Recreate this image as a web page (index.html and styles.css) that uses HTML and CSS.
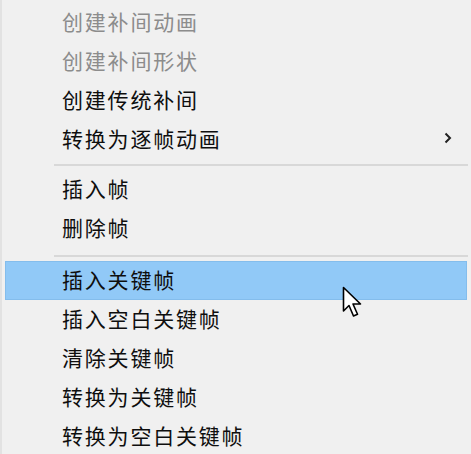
FILE: index.html
```html
<!DOCTYPE html>
<html lang="zh-CN">
<head>
  <meta charset="UTF-8">
  <title>右键菜单</title>
  <link rel="stylesheet" href="styles.css">
</head>
<body>
  <div class="menu">
    <div class="item disabled">创建补间动画</div>
    <div class="item disabled">创建补间形状</div>
    <div class="item">创建传统补间</div>
    <div class="item has-sub">
      转换为逐帧动画
      <svg class="chevron" width="8" height="12" viewBox="0 0 8 12">
        <path d="M1.5 1.5 L6 6 L1.5 10.5" fill="none" stroke="#222" stroke-width="2"/>
      </svg>
    </div>
    <div class="sep sep-a"></div>
    <div class="item">插入帧</div>
    <div class="item">删除帧</div>
    <div class="sep sep-b"></div>
    <div class="item active">插入关键帧</div>
    <div class="item">插入空白关键帧</div>
    <div class="item">清除关键帧</div>
    <div class="item">转换为关键帧</div>
    <div class="item">转换为空白关键帧</div>
  </div>

  <!-- mouse pointer over the highlighted row -->
  <svg class="cursor" width="22" height="33" viewBox="0 0 22 33">
    <path d="M1.5 1.5 L1.5 25 L7 19.5 L11.5 30 L15.5 28.3 L11 18 L18.5 18 Z"
          fill="#fff" stroke="#000" stroke-width="1.6" stroke-linejoin="round"/>
  </svg>
</body>
</html>
```

FILE: styles.css
```css
* {
  margin: 0;
  padding: 0;
  box-sizing: border-box;
}

body {
  font-family: "Noto Sans CJK SC", "Noto Sans", sans-serif;
  background: #f0f0f0;
  width: 471px;
  height: 454px;
  overflow: hidden;
  position: relative;
}

.menu {
  border-left: 2px solid #e2e2e2;
  padding: 3px 4px 0 3px;
  height: 454px;
}

.item {
  height: 39px;
  line-height: 39px;
  padding-left: 57px;
  padding-right: 15px;
  padding-bottom: 3px;
  font-size: 21px;
  letter-spacing: 1.8px;
  color: #0e0e0e;
  display: flex;
  align-items: center;
  white-space: nowrap;
}

.item.disabled {
  color: #8c8c8c;
}

.item.has-sub {
  justify-content: space-between;
}

.chevron {
  display: block;
}

.item.active {
  background: #91c9f7;
  border: 1px solid #84bdec;
  padding-left: 56px;
  padding-bottom: 2px;
}

.sep {
  height: 2px;
  background: #d8d8d8;
  margin-left: 49px;
  margin-right: -1px;
}

.sep-a {
  margin-top: 5px;
  margin-bottom: 4px;
}

.sep-b {
  margin-top: 7px;
  margin-bottom: 4px;
}

.cursor {
  position: absolute;
  left: 342px;
  top: 286px;
}
```
